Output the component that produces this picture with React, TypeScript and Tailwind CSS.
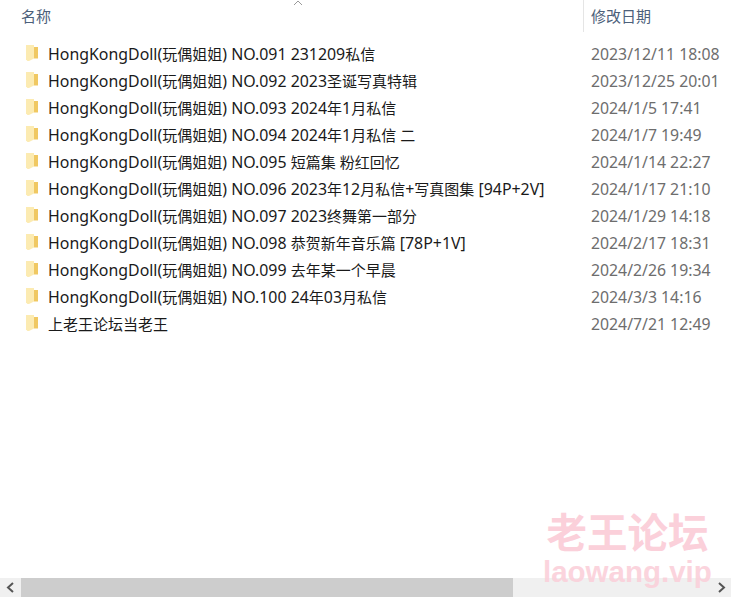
const rows = [
  ["HongKongDoll(玩偶姐姐) NO.091 231209私信", "2023/12/11 18:08"],
  ["HongKongDoll(玩偶姐姐) NO.092 2023圣诞写真特辑", "2023/12/25 20:01"],
  ["HongKongDoll(玩偶姐姐) NO.093 2024年1月私信", "2024/1/5 17:41"],
  ["HongKongDoll(玩偶姐姐) NO.094 2024年1月私信 二", "2024/1/7 19:49"],
  ["HongKongDoll(玩偶姐姐) NO.095 短篇集 粉红回忆", "2024/1/14 22:27"],
  ["HongKongDoll(玩偶姐姐) NO.096 2023年12月私信+写真图集 [94P+2V]", "2024/1/17 21:10"],
  ["HongKongDoll(玩偶姐姐) NO.097 2023终舞第一部分", "2024/1/29 14:18"],
  ["HongKongDoll(玩偶姐姐) NO.098 恭贺新年音乐篇 [78P+1V]", "2024/2/17 18:31"],
  ["HongKongDoll(玩偶姐姐) NO.099 去年某一个早晨", "2024/2/26 19:34"],
  ["HongKongDoll(玩偶姐姐) NO.100 24年03月私信", "2024/3/3 14:16"],
  ["上老王论坛当老王", "2024/7/21 12:49"],
];

// latin runs are set a bit larger than the CJK ones
function MixedText({ text }: { text: string }) {
  const parts = text.split(/([\u4e00-\u9fff]+)/).filter(Boolean);
  return (
    <>
      {parts.map((part, i) =>
        /[\u4e00-\u9fff]/.test(part) ? (
          <span key={i} className="text-[15px]">{part}</span>
        ) : (
          <span key={i} className="text-[15.9px]">{part}</span>
        )
      )}
    </>
  );
}

function FolderIcon() {
  return (
    <svg width="14" height="18" viewBox="0 0 14 18" className="-mt-[1px] shrink-0">
      <path d="M1 1.5h5l1.5 1.5H13v11H1z" fill="#f7dd8c" />
      <path d="M1 1h8v13.5L4 17H2.5L1 15.5z" fill="#fcebb2" />
      <path d="M9 3v11.5H13V3z" fill="#f0c862" />
    </svg>
  );
}

export default function App() {
  return (
    <div className="relative flex h-[597px] w-[731px] flex-col overflow-hidden bg-white font-['Noto_Sans','Noto_Sans_CJK_SC',sans-serif]">
      {/* header */}
      <div className="relative flex h-[32px] shrink-0 text-[15px] text-[#4c607a]">
        <div className="flex w-[583px] items-center pl-[21px]">名称</div>
        <div className="flex flex-1 items-center border-l border-[#e5e5e5] pl-[7px]">修改日期</div>
        <svg width="10" height="6" viewBox="0 0 10 6" className="absolute left-[293px] top-0">
          <path d="M1 5l4-4 4 4" fill="none" stroke="#9a9a9a" strokeWidth="1" />
        </svg>
      </div>

      {/* rows */}
      <div className="flex-1 pt-[8px]">
        {rows.map(([name, date]) => (
          <div key={name} className="flex h-[27px] items-center">
            <div className="flex w-[591px] items-center pl-[25px]">
              <FolderIcon />
              <span className="ml-[9px] whitespace-nowrap leading-[20px] text-[#1a1a1a]">
                <MixedText text={name} />
              </span>
            </div>
            <span className="whitespace-nowrap text-[15.8px] leading-[20px] text-[#6d6d6d]">{date}</span>
          </div>
        ))}
      </div>

      {/* scrollbar */}
      <div className="flex h-[19px] shrink-0 items-center bg-[#f0f0f0]">
        <div className="flex w-[21px] items-center justify-center">
          <svg width="9" height="11" viewBox="0 0 9 11">
            <path d="M7 1L2 5.5 7 10" fill="none" stroke="#555" strokeWidth="2" />
          </svg>
        </div>
        <div className="h-full w-[492px] bg-[#cdcdcd]" />
        <div className="flex flex-1 items-center justify-end pr-[5px]">
          <svg width="9" height="11" viewBox="0 0 9 11">
            <path d="M2 1l5 4.5L2 10" fill="none" stroke="#555" strokeWidth="2" />
          </svg>
        </div>
      </div>

      {/* watermark */}
      <div className="pointer-events-none absolute left-[543px] top-[507px] flex flex-col items-center font-bold text-[#fbd0da]">
        <span className="whitespace-nowrap font-['Noto_Sans_CJK_SC',sans-serif] text-[40.5px] leading-[48px]">老王论坛</span>
        <span className="whitespace-nowrap font-['Liberation_Sans',sans-serif] text-[29.5px] leading-[34px] opacity-90">laowang.vip</span>
      </div>
    </div>
  );
}
